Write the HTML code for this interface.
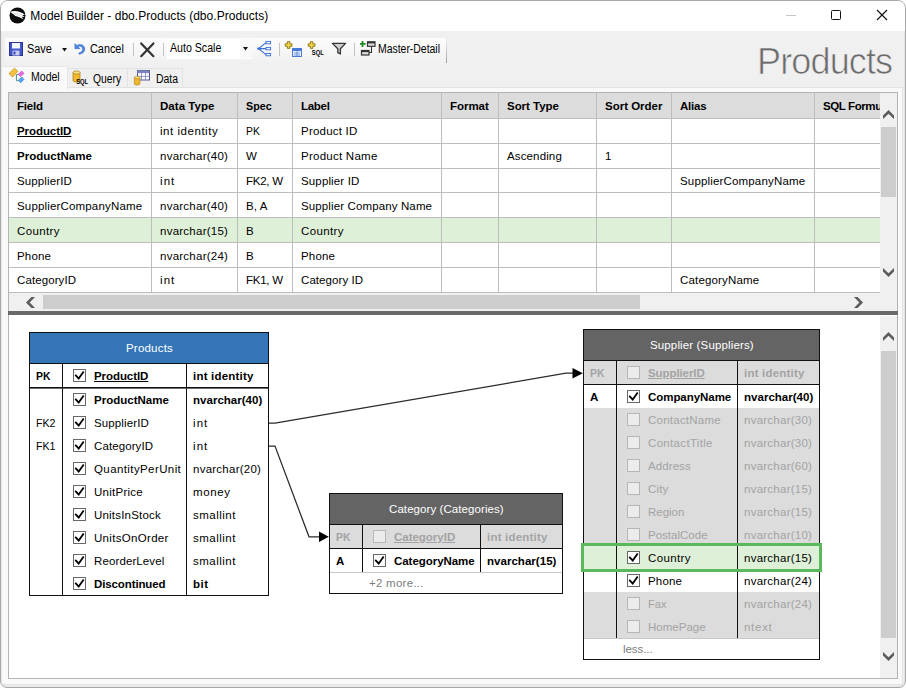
<!DOCTYPE html>
<html><head><meta charset="utf-8">
<style>
*{box-sizing:border-box;margin:0;padding:0}
html,body{width:906px;height:688px;overflow:hidden;background:#fff}
body{font-family:"Liberation Sans",sans-serif;font-size:12px;color:#000;position:relative}
.abs{position:absolute}
#win{position:absolute;left:0;top:0;width:906px;height:688px;background:#f0f0f0;border:1px solid #a8a8a8;box-shadow:inset 0 0 0 1px #e6e6e6;border-radius:8px 8px 7px 7px;overflow:hidden}
.t{position:absolute;white-space:nowrap;line-height:16px;height:16px}
.b{font-weight:bold}
.u{text-decoration:underline}
</style></head><body>
<div id="win"><div class="abs" style="left:0;top:0;width:904px;height:30px;background:#fff"></div></div>

<svg class="abs" style="left:8.5px;top:6.5px" width="17" height="17" viewBox="0 0 17 17"><circle cx="8.5" cy="8.5" r="8" fill="#0c0c0c"/><path d="M1.2 4.9 C5 3.1 11 3.8 15.9 7.7 L13.2 8 L15.6 10 L12.8 9.8 L14.4 12.5 C12 10.6 8.6 9.4 6.4 9 C5 7.8 3 6 1.2 4.9Z" fill="#fff"/><path d="M4 6.2 C8 6.4 11 7.4 13.2 8 M5.4 7.6 C8.4 8 11 8.8 12.8 9.8" stroke="#bbb" stroke-width="0.5" fill="none"/></svg>
<div class="t" style="left:30.2px;top:8px;font-size:12px;letter-spacing:0.03px;">Model Builder - dbo.Products (dbo.Products)</div>
<div class="abs" style="left:786px;top:15px;width:10px;height:1px;background:#c6c6c6;"></div>
<div class="abs" style="left:831px;top:10px;width:10px;height:10px;border:1.3px solid #111;border-radius:1.5px"></div>
<svg class="abs" style="left:876px;top:9px" width="12" height="12" viewBox="0 0 12 12"><path d="M1 1 L11 11 M11 1 L1 11" stroke="#111" stroke-width="1.2" fill="none"/></svg>
<div class="abs" style="left:5px;top:38px;width:441px;height:25px;background:linear-gradient(#fcfcfc,#f6f6f6 60%,#f0f0f0);border-radius:0 3px 3px 0"></div><div class="abs" style="left:446px;top:40px;width:1px;height:23px;background:linear-gradient(#ececec,#c8c8c8 50%,#9c9c9c)"></div>
<svg class="abs" style="left:9px;top:42px" width="14" height="14" viewBox="0 0 14 14"><rect x="0.5" y="0.5" width="13" height="13" fill="#4256cc" stroke="#2a3690"/><rect x="3" y="1" width="8" height="5.5" fill="#f4f6ff"/><rect x="3.5" y="8.5" width="7" height="5" fill="#c8cce8"/><rect x="4.5" y="9.5" width="2" height="3" fill="#3c50c8"/></svg>
<div class="t" style="left:27px;top:41px;font-size:12px;transform:scaleX(0.9101);transform-origin:0 50%;">Save</div>
<svg class="abs" style="left:62px;top:47.5px" width="5" height="4" viewBox="0 0 5 4"><path d="M0 0 L5 0 L2.5 3.4Z" fill="#111"/></svg>
<svg class="abs" style="left:73.5px;top:42.6px" width="12" height="12" viewBox="0 0 14 14"><path d="M1 0.6 L1 6.6 L7 6.6 L4.8 4.4 C7 3 10 4.2 10 7.2 C10 9.6 8 11.2 5.6 11.6 L6 13.2 C10 12.6 12.6 10.2 12.6 7 C12.6 2.2 7 0.2 3.2 2.8Z" fill="#4a88e6" stroke="#2858b0" stroke-width="0.5"/></svg>
<div class="t" style="left:90px;top:41px;font-size:12px;transform:scaleX(0.9047);transform-origin:0 50%;">Cancel</div>
<div class="abs" style="left:133px;top:43px;width:1px;height:13px;background:#c4c4c4;"></div>
<svg class="abs" style="left:138px;top:40px" width="19" height="19" viewBox="0 0 19 19"><path d="M3.2 3.4 L15.4 16.2 M15.4 3.4 L3.2 16.2" stroke="#333" stroke-width="2.2" stroke-linecap="round" fill="none"/></svg>
<div class="abs" style="left:163px;top:43px;width:1px;height:13px;background:#c4c4c4;"></div>
<div class="abs" style="left:167px;top:38.5px;width:84.5px;height:20px;background:#fff;"></div>
<div class="abs" style="left:240px;top:39px;width:11.5px;height:19px;background:#f9f9f9;"></div>
<div class="t" style="left:170px;top:40px;font-size:12px;transform:scaleX(0.8838);transform-origin:0 50%;">Auto Scale</div>
<svg class="abs" style="left:243px;top:47px" width="5" height="4" viewBox="0 0 5 4"><path d="M0 0 L5 0 L2.5 3.4Z" fill="#111"/></svg>
<svg class="abs" style="left:256px;top:40px" width="16" height="17" viewBox="0 0 16 17"><path d="M2.6 8.6 L10 2.6 M2.6 8.6 L10 8.6 M2.6 8.6 L10 14.6" stroke="#3a6fd0" stroke-width="1.2" fill="none"/><rect x="10" y="1.4" width="4.6" height="2.4" fill="#f4f7ff" stroke="#3a6fd0" stroke-width="0.9"/><rect x="10" y="7.4" width="4.6" height="2.4" fill="#f4f7ff" stroke="#3a6fd0" stroke-width="0.9"/><rect x="10" y="13.4" width="4.6" height="2.4" fill="#f4f7ff" stroke="#3a6fd0" stroke-width="0.9"/><rect x="1.2" y="7.6" width="2.6" height="2" fill="#3a6fd0"/></svg>
<div class="abs" style="left:279px;top:43px;width:1px;height:13px;background:#c4c4c4;"></div>
<svg class="abs" style="left:284px;top:40px" width="18" height="18" viewBox="0 0 18 18"><path d="M3.4 1.6 h2.4 v2.2 h2.2 v2.4 h-2.2 v2.2 h-2.4 v-2.2 h-2.2 v-2.4 h2.2z" fill="#f2d548" stroke="#8a7410" stroke-width="0.9"/><rect x="8.5" y="8.5" width="9" height="8" fill="#e8eefc" stroke="#4a78d8"/><rect x="8.5" y="8.5" width="9" height="2.5" fill="#4a78d8"/><path d="M10 13 h6 M10 15 h6 M13 11 v5" stroke="#4a78d8" stroke-width="0.7"/></svg>
<svg class="abs" style="left:307px;top:40px" width="20" height="18" viewBox="0 0 20 18"><path d="M3.4 1.6 h2.4 v2.2 h2.2 v2.4 h-2.2 v2.2 h-2.4 v-2.2 h-2.2 v-2.4 h2.2z" fill="#f2d548" stroke="#8a7410" stroke-width="0.9"/><text x="4.8" y="15" font-family="Liberation Sans" font-size="7.4" font-weight="bold" fill="#000" textLength="12" lengthAdjust="spacingAndGlyphs">SQL</text></svg>
<svg class="abs" style="left:331px;top:42px" width="16" height="14" viewBox="0 0 16 14"><path d="M1.4 1.4 L14.6 1.4 L9.4 6.8 L9.4 12 L6.8 10.6 L6.8 6.8Z" fill="#cfcfcf" stroke="#333" stroke-width="1.3" stroke-linejoin="round"/></svg>
<div class="abs" style="left:354px;top:43px;width:1px;height:13px;background:#c4c4c4;"></div>
<svg class="abs" style="left:360px;top:41px" width="16" height="15" viewBox="0 0 16 15"><path d="M2.5 0 v6 M0 2.8 h5.6" stroke="#1a8a1a" stroke-width="1.8"/><rect x="7.5" y="0.8" width="7.5" height="4.5" fill="#ddd" stroke="#333" stroke-width="1.2"/><rect x="7.5" y="0.8" width="7.5" height="1.6" fill="#333"/><rect x="1.5" y="9.5" width="7.5" height="4.5" fill="#ddd" stroke="#333" stroke-width="1.2"/><rect x="1.5" y="9.5" width="7.5" height="1.6" fill="#333"/><path d="M11.5 5.5 v6 h-2.5" stroke="#333" stroke-width="1.1" fill="none"/></svg>
<div class="t" style="left:378px;top:41px;font-size:12px;transform:scaleX(0.8688);transform-origin:0 50%;">Master-Detail</div>
<div class="t" style="left:757px;top:40px;font-size:36px;line-height:44px;height:44px;color:#6a6a6a;letter-spacing:-0.85px;-webkit-text-stroke:0.7px #f0f0f0">Products</div>
<div class="abs" style="left:2px;top:87px;width:901px;height:598px;border:1px solid #e2e2e2;border-left:none;background:#f9f9f9"></div>
<div class="abs" style="left:2px;top:66px;width:66px;height:23px;background:#f9f9f9;border:1px solid #e6e6e6;border-left:none;border-bottom:none"></div>
<div class="abs" style="left:68px;top:68px;width:60px;height:19px;background:#f0f0f0;border:1px solid #e2e2e2;border-left:none;border-bottom:none"></div>
<div class="abs" style="left:128px;top:68px;width:55px;height:19px;background:#f0f0f0;border:1px solid #e2e2e2;border-left:none;border-bottom:none"></div>
<svg class="abs" style="left:8px;top:66px" width="18" height="18" viewBox="0 0 18 18"><path d="M8.4 8.6 V14.7 H10.6 M8.4 8.6 H10.4" stroke="#4a9090" stroke-width="1" fill="none"/><path d="M1.1 7.5 L6.5 2.2 L9.8 5.3 L4.5 11Z" fill="#f8c440" stroke="#c08a10" stroke-width="0.8"/><path d="M10.2 8.2 L13.8 5 L16 7.5 L12.4 10.5Z" fill="#ec6ce8" stroke="#b040b0" stroke-width="0.6"/><path d="M10.5 14 L13.8 11.1 L16 13.4 L12.6 16.8Z" fill="#5aa8f4" stroke="#2868c8" stroke-width="0.6"/></svg>
<div class="t" style="left:31px;top:69px;font-size:12px;transform:scaleX(0.878);transform-origin:0 50%;">Model</div>
<svg class="abs" style="left:72px;top:70px" width="20" height="18" viewBox="0 0 20 18"><path d="M1 2.5 v8 c0 2 7 2 7 0 v-8z" fill="#f0b830" stroke="#a87808" stroke-width="0.7"/><ellipse cx="4.5" cy="2.5" rx="3.5" ry="1.6" fill="#fbe08a" stroke="#a87808" stroke-width="0.7"/><text x="4.2" y="14.2" font-family="Liberation Sans" font-size="7.4" font-weight="bold" fill="#000" textLength="12" lengthAdjust="spacingAndGlyphs">SQL</text></svg>
<div class="t" style="left:93.2px;top:71px;font-size:12px;transform:scaleX(0.8627);transform-origin:0 50%;">Query</div>
<svg class="abs" style="left:133px;top:68px" width="19" height="19" viewBox="0 0 19 19"><rect x="4.5" y="2.5" width="12" height="9.5" fill="#fff" stroke="#505a98"/><rect x="4.5" y="2.5" width="12" height="2.6" fill="#8088c0"/><path d="M4.5 8.4 h12 M8.5 2.5 v9.5 M12.5 2.5 v9.5" stroke="#7880b8" stroke-width="0.8"/><g transform="translate(0.5,7.5) scale(0.8)"><path d="M1 2.5 v8 c0 2 7 2 7 0 v-8z" fill="#f0b830" stroke="#a87808" stroke-width="0.7"/><ellipse cx="4.5" cy="2.5" rx="3.5" ry="1.6" fill="#fbe08a" stroke="#a87808" stroke-width="0.7"/></g></svg>
<div class="t" style="left:156px;top:71px;font-size:12px;transform:scaleX(0.8715);transform-origin:0 50%;">Data</div>
<div class="abs" style="left:8px;top:92px;width:890px;height:219px;background:#fff;border:1px solid #b4b4b4;"></div>
<div class="abs" style="left:9px;top:93px;width:871px;height:25px;background:#dcdcdc;"></div>
<div class="abs" style="left:9px;top:218px;width:871px;height:24px;background:#dff0d8;"></div>
<div class="abs" style="left:9px;top:118px;width:871px;height:1px;background:#bdbdbd;"></div>
<div class="abs" style="left:9px;top:143px;width:871px;height:1px;background:#bdbdbd;"></div>
<div class="abs" style="left:9px;top:168px;width:871px;height:1px;background:#bdbdbd;"></div>
<div class="abs" style="left:9px;top:192px;width:871px;height:1px;background:#bdbdbd;"></div>
<div class="abs" style="left:9px;top:217px;width:871px;height:1px;background:#bdbdbd;"></div>
<div class="abs" style="left:9px;top:242px;width:871px;height:1px;background:#bdbdbd;"></div>
<div class="abs" style="left:9px;top:267px;width:871px;height:1px;background:#bdbdbd;"></div>
<div class="abs" style="left:9px;top:292px;width:871px;height:1px;background:#bdbdbd;"></div>
<div class="abs" style="left:151px;top:93px;width:1px;height:199px;background:#bdbdbd;"></div>
<div class="abs" style="left:237px;top:93px;width:1px;height:199px;background:#bdbdbd;"></div>
<div class="abs" style="left:292px;top:93px;width:1px;height:199px;background:#bdbdbd;"></div>
<div class="abs" style="left:441px;top:93px;width:1px;height:199px;background:#bdbdbd;"></div>
<div class="abs" style="left:498px;top:93px;width:1px;height:199px;background:#bdbdbd;"></div>
<div class="abs" style="left:596px;top:93px;width:1px;height:199px;background:#bdbdbd;"></div>
<div class="abs" style="left:671px;top:93px;width:1px;height:199px;background:#bdbdbd;"></div>
<div class="abs" style="left:814px;top:93px;width:1px;height:199px;background:#bdbdbd;"></div>
<div class="t b" style="left:17px;top:98px;font-size:11.5px;letter-spacing:-0.211px;">Field</div>
<div class="t b" style="left:160px;top:98px;font-size:11.5px;letter-spacing:0.049px;">Data Type</div>
<div class="t b" style="left:246px;top:98px;font-size:11.5px;transform:scaleX(0.9345);transform-origin:0 50%;">Spec</div>
<div class="t b" style="left:301px;top:98px;font-size:11.5px;letter-spacing:-0.287px;">Label</div>
<div class="t b" style="left:450px;top:98px;font-size:11.5px;letter-spacing:-0.037px;">Format</div>
<div class="t b" style="left:507px;top:98px;font-size:11.5px;letter-spacing:-0.036px;">Sort Type</div>
<div class="t b" style="left:605px;top:98px;font-size:11.5px;letter-spacing:-0.013px;">Sort Order</div>
<div class="t b" style="left:680px;top:98px;font-size:11.5px;letter-spacing:-0.225px;">Alias</div>
<div class="t b" style="left:823px;top:98px;font-size:11.5px;letter-spacing:-0.4px;">SQL Formula</div>
<div class="t b u" style="left:17px;top:123px;font-size:11.5px;letter-spacing:-0.069px;">ProductID</div>
<div class="t" style="left:160px;top:123px;font-size:11.5px;letter-spacing:0.538px;">int identity</div>
<div class="t" style="left:246px;top:123px;font-size:11.5px;transform:scaleX(0.8994);transform-origin:0 50%;">PK</div>
<div class="t" style="left:301px;top:123px;font-size:11.5px;letter-spacing:0.219px;">Product ID</div>
<div class="t b" style="left:17px;top:148px;font-size:11.5px;letter-spacing:0.002px;">ProductName</div>
<div class="t" style="left:160px;top:148px;font-size:11.5px;letter-spacing:0.245px;">nvarchar(40)</div>
<div class="t" style="left:246px;top:148px;font-size:11.5px;letter-spacing:-0.15px;">W</div>
<div class="t" style="left:301px;top:148px;font-size:11.5px;letter-spacing:0.253px;">Product Name</div>
<div class="t" style="left:507px;top:148px;font-size:11.5px;letter-spacing:0.135px;">Ascending</div>
<div class="t" style="left:605px;top:148px;font-size:11.5px;letter-spacing:-0.15px;">1</div>
<div class="t" style="left:17px;top:173px;font-size:11.5px;letter-spacing:0.122px;">SupplierID</div>
<div class="t" style="left:160px;top:173px;font-size:11.5px;letter-spacing:1.072px;">int</div>
<div class="t" style="left:246px;top:173px;font-size:11.5px;letter-spacing:-0.249px;">FK2, W</div>
<div class="t" style="left:301px;top:173px;font-size:11.5px;letter-spacing:0.141px;">Supplier ID</div>
<div class="t" style="left:680px;top:173px;font-size:11.5px;letter-spacing:0.167px;">SupplierCompanyName</div>
<div class="t" style="left:17px;top:198px;font-size:11.5px;letter-spacing:0.167px;">SupplierCompanyName</div>
<div class="t" style="left:160px;top:198px;font-size:11.5px;letter-spacing:0.245px;">nvarchar(40)</div>
<div class="t" style="left:246px;top:198px;font-size:11.5px;letter-spacing:0.097px;">B, A</div>
<div class="t" style="left:301px;top:198px;font-size:11.5px;letter-spacing:0.126px;">Supplier Company Name</div>
<div class="t" style="left:17px;top:223px;font-size:11.5px;letter-spacing:0.386px;">Country</div>
<div class="t" style="left:160px;top:223px;font-size:11.5px;letter-spacing:0.245px;">nvarchar(15)</div>
<div class="t" style="left:246px;top:223px;font-size:11.5px;letter-spacing:-0.15px;">B</div>
<div class="t" style="left:301px;top:223px;font-size:11.5px;letter-spacing:0.386px;">Country</div>
<div class="t" style="left:17px;top:248px;font-size:11.5px;letter-spacing:0.159px;">Phone</div>
<div class="t" style="left:160px;top:248px;font-size:11.5px;letter-spacing:0.245px;">nvarchar(24)</div>
<div class="t" style="left:246px;top:248px;font-size:11.5px;letter-spacing:-0.15px;">B</div>
<div class="t" style="left:301px;top:248px;font-size:11.5px;letter-spacing:0.159px;">Phone</div>
<div class="t" style="left:17px;top:272px;font-size:11.5px;letter-spacing:0.092px;">CategoryID</div>
<div class="t" style="left:160px;top:272px;font-size:11.5px;letter-spacing:1.072px;">int</div>
<div class="t" style="left:246px;top:272px;font-size:11.5px;letter-spacing:-0.249px;">FK1, W</div>
<div class="t" style="left:301px;top:272px;font-size:11.5px;letter-spacing:0.074px;">Category ID</div>
<div class="t" style="left:680px;top:272px;font-size:11.5px;letter-spacing:0.169px;">CategoryName</div>
<div class="abs" style="left:880px;top:93px;width:17px;height:200px;background:#f0f0f0;"></div>
<div class="abs" style="left:881px;top:127px;width:15px;height:70px;background:#cdcdcd;"></div>
<svg class="abs" style="left:883px;top:110.3px" width="11" height="9" viewBox="0 0 11 9"><path d="M5.5 0 L11 5.4 L11 9 L5.5 3.7 L0 9 L0 5.4Z" fill="#5c5c5c"/></svg>
<svg class="abs" style="left:883px;top:268px" width="11" height="9" viewBox="0 0 11 9"><path d="M5.5 9 L11 3.6 L11 0 L5.5 5.3 L0 0 L0 3.6Z" fill="#5c5c5c"/></svg>
<div class="abs" style="left:9px;top:293px;width:888px;height:18px;background:#f0f0f0;"></div>
<div class="abs" style="left:43px;top:295px;width:597px;height:14px;background:#cdcdcd;"></div>
<svg class="abs" style="left:26px;top:297px" width="9" height="11" viewBox="0 0 9 11"><path d="M0 5.5 L5.4 0 L9 0 L3.7 5.5 L9 11 L5.4 11Z" fill="#5c5c5c"/></svg>
<svg class="abs" style="left:854px;top:297px" width="9" height="11" viewBox="0 0 9 11"><path d="M9 5.5 L3.6 0 L0 0 L5.3 5.5 L0 11 L3.6 11Z" fill="#5c5c5c"/></svg>
<div class="abs" style="left:8px;top:311px;width:890px;height:4px;background:#696969;"></div>
<div class="abs" style="left:8px;top:315px;width:890px;height:364px;background:#fff;border:1px solid #b4b4b4;border-top:none;"></div>
<div class="abs" style="left:880px;top:316px;width:17px;height:362px;background:#f0f0f0;"></div>
<div class="abs" style="left:881px;top:351px;width:15px;height:287px;background:#cdcdcd;"></div>
<svg class="abs" style="left:883px;top:332px" width="11" height="9" viewBox="0 0 11 9"><path d="M5.5 0 L11 5.4 L11 9 L5.5 3.7 L0 9 L0 5.4Z" fill="#5c5c5c"/></svg>
<svg class="abs" style="left:883px;top:652px" width="11" height="9" viewBox="0 0 11 9"><path d="M5.5 9 L11 3.6 L11 0 L5.5 5.3 L0 0 L0 3.6Z" fill="#5c5c5c"/></svg>
<div class="abs" style="left:29px;top:332px;width:240px;height:264px;background:#fff;border:1px solid #111;"></div>
<div class="abs" style="left:30px;top:333px;width:238px;height:30px;background:#3375b7;"></div>
<div class="t" style="left:126px;top:340px;font-size:11.5px;letter-spacing:0.201px;color:#fff;">Products</div>
<div class="abs" style="left:30px;top:363px;width:238px;height:1px;background:#111;"></div>
<div class="abs" style="left:30px;top:387px;width:238px;height:1px;background:#111;"></div>
<div class="abs" style="left:30px;top:388px;width:238px;height:1px;background:#6a6a6a;"></div>
<div class="abs" style="left:62px;top:364px;width:1px;height:231px;background:#111;"></div>
<div class="abs" style="left:186px;top:364px;width:1px;height:231px;background:#111;"></div>
<div class="t b" style="left:36px;top:368px;font-size:11.5px;transform:scaleX(0.9071);transform-origin:0 50%;">PK</div>
<svg class="abs" style="left:73px;top:369px" width="13" height="13" viewBox="0 0 13 13"><rect x="0.5" y="0.5" width="12" height="12" fill="#fff" stroke="#686868"/><path d="M2.2 5.9 L5.7 9.5 L10.7 2.5" fill="none" stroke="#000" stroke-width="1.8"/></svg>
<div class="t b u" style="left:94px;top:368px;font-size:11.5px;letter-spacing:-0.069px;">ProductID</div>
<div class="t b" style="left:193px;top:368px;font-size:11.5px;letter-spacing:0.205px;">int identity</div>
<svg class="abs" style="left:73px;top:393px" width="13" height="13" viewBox="0 0 13 13"><rect x="0.5" y="0.5" width="12" height="12" fill="#fff" stroke="#686868"/><path d="M2.2 5.9 L5.7 9.5 L10.7 2.5" fill="none" stroke="#000" stroke-width="1.8"/></svg>
<div class="t b" style="left:94px;top:392px;font-size:11.5px;letter-spacing:0.002px;">ProductName</div>
<div class="t b" style="left:193px;top:392px;font-size:11.5px;letter-spacing:0.023px;">nvarchar(40)</div>
<div class="t" style="left:36px;top:415px;font-size:11.5px;transform:scaleX(0.9244);transform-origin:0 50%;">FK2</div>
<svg class="abs" style="left:73px;top:416px" width="13" height="13" viewBox="0 0 13 13"><rect x="0.5" y="0.5" width="12" height="12" fill="#fff" stroke="#686868"/><path d="M2.2 5.9 L5.7 9.5 L10.7 2.5" fill="none" stroke="#000" stroke-width="1.8"/></svg>
<div class="t" style="left:94px;top:415px;font-size:11.5px;letter-spacing:0.122px;">SupplierID</div>
<div class="t" style="left:193px;top:415px;font-size:11.5px;letter-spacing:1.072px;">int</div>
<div class="t" style="left:36px;top:438px;font-size:11.5px;transform:scaleX(0.9244);transform-origin:0 50%;">FK1</div>
<svg class="abs" style="left:73px;top:439px" width="13" height="13" viewBox="0 0 13 13"><rect x="0.5" y="0.5" width="12" height="12" fill="#fff" stroke="#686868"/><path d="M2.2 5.9 L5.7 9.5 L10.7 2.5" fill="none" stroke="#000" stroke-width="1.8"/></svg>
<div class="t" style="left:94px;top:438px;font-size:11.5px;letter-spacing:0.092px;">CategoryID</div>
<div class="t" style="left:193px;top:438px;font-size:11.5px;letter-spacing:1.072px;">int</div>
<svg class="abs" style="left:73px;top:462px" width="13" height="13" viewBox="0 0 13 13"><rect x="0.5" y="0.5" width="12" height="12" fill="#fff" stroke="#686868"/><path d="M2.2 5.9 L5.7 9.5 L10.7 2.5" fill="none" stroke="#000" stroke-width="1.8"/></svg>
<div class="t" style="left:94px;top:461px;font-size:11.5px;letter-spacing:0.401px;">QuantityPerUnit</div>
<div class="t" style="left:193px;top:461px;font-size:11.5px;letter-spacing:0.245px;">nvarchar(20)</div>
<svg class="abs" style="left:73px;top:485px" width="13" height="13" viewBox="0 0 13 13"><rect x="0.5" y="0.5" width="12" height="12" fill="#fff" stroke="#686868"/><path d="M2.2 5.9 L5.7 9.5 L10.7 2.5" fill="none" stroke="#000" stroke-width="1.8"/></svg>
<div class="t" style="left:94px;top:484px;font-size:11.5px;letter-spacing:0.255px;">UnitPrice</div>
<div class="t" style="left:193px;top:484px;font-size:11.5px;letter-spacing:0.592px;">money</div>
<svg class="abs" style="left:73px;top:508px" width="13" height="13" viewBox="0 0 13 13"><rect x="0.5" y="0.5" width="12" height="12" fill="#fff" stroke="#686868"/><path d="M2.2 5.9 L5.7 9.5 L10.7 2.5" fill="none" stroke="#000" stroke-width="1.8"/></svg>
<div class="t" style="left:94px;top:507px;font-size:11.5px;letter-spacing:0.194px;">UnitsInStock</div>
<div class="t" style="left:193px;top:507px;font-size:11.5px;letter-spacing:0.488px;">smallint</div>
<svg class="abs" style="left:73px;top:531px" width="13" height="13" viewBox="0 0 13 13"><rect x="0.5" y="0.5" width="12" height="12" fill="#fff" stroke="#686868"/><path d="M2.2 5.9 L5.7 9.5 L10.7 2.5" fill="none" stroke="#000" stroke-width="1.8"/></svg>
<div class="t" style="left:94px;top:530px;font-size:11.5px;letter-spacing:0.315px;">UnitsOnOrder</div>
<div class="t" style="left:193px;top:530px;font-size:11.5px;letter-spacing:0.488px;">smallint</div>
<svg class="abs" style="left:73px;top:554px" width="13" height="13" viewBox="0 0 13 13"><rect x="0.5" y="0.5" width="12" height="12" fill="#fff" stroke="#686868"/><path d="M2.2 5.9 L5.7 9.5 L10.7 2.5" fill="none" stroke="#000" stroke-width="1.8"/></svg>
<div class="t" style="left:94px;top:553px;font-size:11.5px;letter-spacing:0.114px;">ReorderLevel</div>
<div class="t" style="left:193px;top:553px;font-size:11.5px;letter-spacing:0.488px;">smallint</div>
<svg class="abs" style="left:73px;top:577px" width="13" height="13" viewBox="0 0 13 13"><rect x="0.5" y="0.5" width="12" height="12" fill="#fff" stroke="#686868"/><path d="M2.2 5.9 L5.7 9.5 L10.7 2.5" fill="none" stroke="#000" stroke-width="1.8"/></svg>
<div class="t b" style="left:94px;top:576px;font-size:11.5px;letter-spacing:-0.113px;">Discontinued</div>
<div class="t b" style="left:193px;top:576px;font-size:11.5px;letter-spacing:0.519px;">bit</div>
<div class="abs" style="left:329px;top:493px;width:234px;height:101px;background:#fff;border:1px solid #111;"></div>
<div class="abs" style="left:330px;top:494px;width:232px;height:30px;background:#646464;"></div>
<div class="t" style="left:389px;top:501px;font-size:11.5px;letter-spacing:0.078px;color:#fff;">Category (Categories)</div>
<div class="abs" style="left:330px;top:524px;width:232px;height:1px;background:#111;"></div>
<div class="abs" style="left:330px;top:525px;width:232px;height:23px;background:#dcdcdc;"></div>
<div class="abs" style="left:330px;top:548px;width:232px;height:1px;background:#111;"></div>
<div class="abs" style="left:330px;top:572px;width:232px;height:1px;background:#c8c8c8;"></div>
<div class="abs" style="left:362px;top:525px;width:1px;height:47px;background:#111;"></div>
<div class="abs" style="left:480px;top:525px;width:1px;height:47px;background:#111;"></div>
<div class="t b" style="left:336px;top:529px;font-size:11.5px;color:#a3a3a3;transform:scaleX(0.9071);transform-origin:0 50%;">PK</div>
<svg class="abs" style="left:373px;top:530px" width="13" height="13" viewBox="0 0 13 13"><rect x="0.5" y="0.5" width="12" height="12" fill="#ececec" stroke="#b6b6b6"/></svg>
<div class="t b u" style="left:394px;top:529px;font-size:11.5px;letter-spacing:-0.018px;color:#a3a3a3;">CategoryID</div>
<div class="t b" style="left:487px;top:529px;font-size:11.5px;letter-spacing:0.205px;color:#a3a3a3;">int identity</div>
<div class="t b" style="left:336px;top:553px;font-size:11.5px;letter-spacing:-0.36px;">A</div>
<svg class="abs" style="left:373px;top:554px" width="13" height="13" viewBox="0 0 13 13"><rect x="0.5" y="0.5" width="12" height="12" fill="#fff" stroke="#686868"/><path d="M2.2 5.9 L5.7 9.5 L10.7 2.5" fill="none" stroke="#000" stroke-width="1.8"/></svg>
<div class="t b" style="left:394px;top:553px;font-size:11.5px;letter-spacing:-0.043px;">CategoryName</div>
<div class="t b" style="left:487px;top:553px;font-size:11.5px;letter-spacing:0.032px;">nvarchar(15)</div>
<div class="t" style="left:369px;top:575px;font-size:11.5px;letter-spacing:0.267px;color:#7c7c7c;">+2 more...</div>
<div class="abs" style="left:583px;top:329px;width:237px;height:331px;background:#fff;border:1px solid #111;"></div>
<div class="abs" style="left:584px;top:330px;width:235px;height:30px;background:#646464;"></div>
<div class="t" style="left:650px;top:337px;font-size:11.5px;letter-spacing:0.137px;color:#fff;">Supplier (Suppliers)</div>
<div class="abs" style="left:584px;top:360px;width:235px;height:1px;background:#111;"></div>
<div class="abs" style="left:584px;top:361px;width:235px;height:23px;background:#dcdcdc;"></div>
<div class="abs" style="left:584px;top:384px;width:235px;height:1px;background:#111;"></div>
<div class="t b" style="left:590px;top:365px;font-size:11.5px;color:#a3a3a3;transform:scaleX(0.9071);transform-origin:0 50%;">PK</div>
<svg class="abs" style="left:627px;top:366px" width="13" height="13" viewBox="0 0 13 13"><rect x="0.5" y="0.5" width="12" height="12" fill="#ececec" stroke="#b6b6b6"/></svg>
<div class="t b u" style="left:648px;top:365px;font-size:11.5px;letter-spacing:-0.091px;color:#a3a3a3;">SupplierID</div>
<div class="t b" style="left:744px;top:365px;font-size:11.5px;letter-spacing:0.205px;color:#a3a3a3;">int identity</div>
<div class="t b" style="left:590px;top:389px;font-size:11.5px;letter-spacing:-0.36px;">A</div>
<svg class="abs" style="left:627px;top:390px" width="13" height="13" viewBox="0 0 13 13"><rect x="0.5" y="0.5" width="12" height="12" fill="#fff" stroke="#686868"/><path d="M2.2 5.9 L5.7 9.5 L10.7 2.5" fill="none" stroke="#000" stroke-width="1.8"/></svg>
<div class="t b" style="left:648px;top:389px;font-size:11.5px;letter-spacing:-0.052px;">CompanyName</div>
<div class="t b" style="left:744px;top:389px;font-size:11.5px;letter-spacing:0.023px;">nvarchar(40)</div>
<div class="abs" style="left:584px;top:408px;width:235px;height:23px;background:#dcdcdc;"></div>
<div class="abs" style="left:584px;top:431px;width:235px;height:23px;background:#dcdcdc;"></div>
<div class="abs" style="left:584px;top:454px;width:235px;height:23px;background:#dcdcdc;"></div>
<div class="abs" style="left:584px;top:477px;width:235px;height:23px;background:#dcdcdc;"></div>
<div class="abs" style="left:584px;top:500px;width:235px;height:23px;background:#dcdcdc;"></div>
<div class="abs" style="left:584px;top:523px;width:235px;height:23px;background:#dcdcdc;"></div>
<div class="abs" style="left:584px;top:546px;width:235px;height:23px;background:#dff0d8;"></div>
<div class="abs" style="left:584px;top:592px;width:235px;height:23px;background:#dcdcdc;"></div>
<div class="abs" style="left:584px;top:615px;width:235px;height:23px;background:#dcdcdc;"></div>
<svg class="abs" style="left:627px;top:413px" width="13" height="13" viewBox="0 0 13 13"><rect x="0.5" y="0.5" width="12" height="12" fill="#ececec" stroke="#b6b6b6"/></svg>
<div class="t" style="left:648px;top:412px;font-size:11.5px;letter-spacing:0.239px;color:#a3a3a3;">ContactName</div>
<div class="t" style="left:744px;top:412px;font-size:11.5px;letter-spacing:0.245px;color:#a3a3a3;">nvarchar(30)</div>
<svg class="abs" style="left:627px;top:436px" width="13" height="13" viewBox="0 0 13 13"><rect x="0.5" y="0.5" width="12" height="12" fill="#ececec" stroke="#b6b6b6"/></svg>
<div class="t" style="left:648px;top:435px;font-size:11.5px;letter-spacing:0.324px;color:#a3a3a3;">ContactTitle</div>
<div class="t" style="left:744px;top:435px;font-size:11.5px;letter-spacing:0.245px;color:#a3a3a3;">nvarchar(30)</div>
<svg class="abs" style="left:627px;top:459px" width="13" height="13" viewBox="0 0 13 13"><rect x="0.5" y="0.5" width="12" height="12" fill="#ececec" stroke="#b6b6b6"/></svg>
<div class="t" style="left:648px;top:458px;font-size:11.5px;letter-spacing:0.085px;color:#a3a3a3;">Address</div>
<div class="t" style="left:744px;top:458px;font-size:11.5px;letter-spacing:0.245px;color:#a3a3a3;">nvarchar(60)</div>
<svg class="abs" style="left:627px;top:482px" width="13" height="13" viewBox="0 0 13 13"><rect x="0.5" y="0.5" width="12" height="12" fill="#ececec" stroke="#b6b6b6"/></svg>
<div class="t" style="left:648px;top:481px;font-size:11.5px;letter-spacing:0.163px;color:#a3a3a3;">City</div>
<div class="t" style="left:744px;top:481px;font-size:11.5px;letter-spacing:0.245px;color:#a3a3a3;">nvarchar(15)</div>
<svg class="abs" style="left:627px;top:505px" width="13" height="13" viewBox="0 0 13 13"><rect x="0.5" y="0.5" width="12" height="12" fill="#ececec" stroke="#b6b6b6"/></svg>
<div class="t" style="left:648px;top:504px;font-size:11.5px;letter-spacing:-0.011px;color:#a3a3a3;">Region</div>
<div class="t" style="left:744px;top:504px;font-size:11.5px;letter-spacing:0.245px;color:#a3a3a3;">nvarchar(15)</div>
<svg class="abs" style="left:627px;top:528px" width="13" height="13" viewBox="0 0 13 13"><rect x="0.5" y="0.5" width="12" height="12" fill="#ececec" stroke="#b6b6b6"/></svg>
<div class="t" style="left:648px;top:527px;font-size:11.5px;letter-spacing:0.015px;color:#a3a3a3;">PostalCode</div>
<div class="t" style="left:744px;top:527px;font-size:11.5px;letter-spacing:0.245px;color:#a3a3a3;">nvarchar(10)</div>
<svg class="abs" style="left:627px;top:551px" width="13" height="13" viewBox="0 0 13 13"><rect x="0.5" y="0.5" width="12" height="12" fill="#fff" stroke="#686868"/><path d="M2.2 5.9 L5.7 9.5 L10.7 2.5" fill="none" stroke="#000" stroke-width="1.8"/></svg>
<div class="t" style="left:648px;top:550px;font-size:11.5px;letter-spacing:0.386px;">Country</div>
<div class="t" style="left:744px;top:550px;font-size:11.5px;letter-spacing:0.245px;">nvarchar(15)</div>
<svg class="abs" style="left:627px;top:574px" width="13" height="13" viewBox="0 0 13 13"><rect x="0.5" y="0.5" width="12" height="12" fill="#fff" stroke="#686868"/><path d="M2.2 5.9 L5.7 9.5 L10.7 2.5" fill="none" stroke="#000" stroke-width="1.8"/></svg>
<div class="t" style="left:648px;top:573px;font-size:11.5px;letter-spacing:0.159px;">Phone</div>
<div class="t" style="left:744px;top:573px;font-size:11.5px;letter-spacing:0.245px;">nvarchar(24)</div>
<svg class="abs" style="left:627px;top:597px" width="13" height="13" viewBox="0 0 13 13"><rect x="0.5" y="0.5" width="12" height="12" fill="#ececec" stroke="#b6b6b6"/></svg>
<div class="t" style="left:648px;top:596px;font-size:11.5px;color:#a3a3a3;transform:scaleX(0.9597);transform-origin:0 50%;">Fax</div>
<div class="t" style="left:744px;top:596px;font-size:11.5px;letter-spacing:0.245px;color:#a3a3a3;">nvarchar(24)</div>
<svg class="abs" style="left:627px;top:620px" width="13" height="13" viewBox="0 0 13 13"><rect x="0.5" y="0.5" width="12" height="12" fill="#ececec" stroke="#b6b6b6"/></svg>
<div class="t" style="left:648px;top:619px;font-size:11.5px;letter-spacing:0.008px;color:#a3a3a3;">HomePage</div>
<div class="t" style="left:744px;top:619px;font-size:11.5px;letter-spacing:0.716px;color:#a3a3a3;">ntext</div>
<div class="abs" style="left:616px;top:361px;width:1px;height:277px;background:#111;"></div>
<div class="abs" style="left:737px;top:361px;width:1px;height:277px;background:#111;"></div>
<div class="abs" style="left:584px;top:638px;width:235px;height:1px;background:#c8c8c8;"></div>
<div class="t" style="left:623px;top:641px;font-size:11.5px;letter-spacing:-0.058px;color:#7c7c7c;">less...</div>
<div class="abs" style="left:581px;top:543px;width:241px;height:29px;border:3px solid #5cb85c"></div>
<svg class="abs" style="left:0;top:0" width="906" height="688" viewBox="0 0 906 688"><path d="M269 423.2 L275 423.2 L566 373.2 L574 373.2" stroke="#2a2a2a" stroke-width="1.25" fill="none"/><path d="M572.5 368 L582.8 373.2 L572.5 378.4Z" fill="#000"/><path d="M269 446.1 L275 446.1 L309 536.8 L320 536.8" stroke="#2a2a2a" stroke-width="1.25" fill="none"/><path d="M319 531.5 L328.8 536.8 L319 542.1Z" fill="#000"/></svg>
</body></html>
